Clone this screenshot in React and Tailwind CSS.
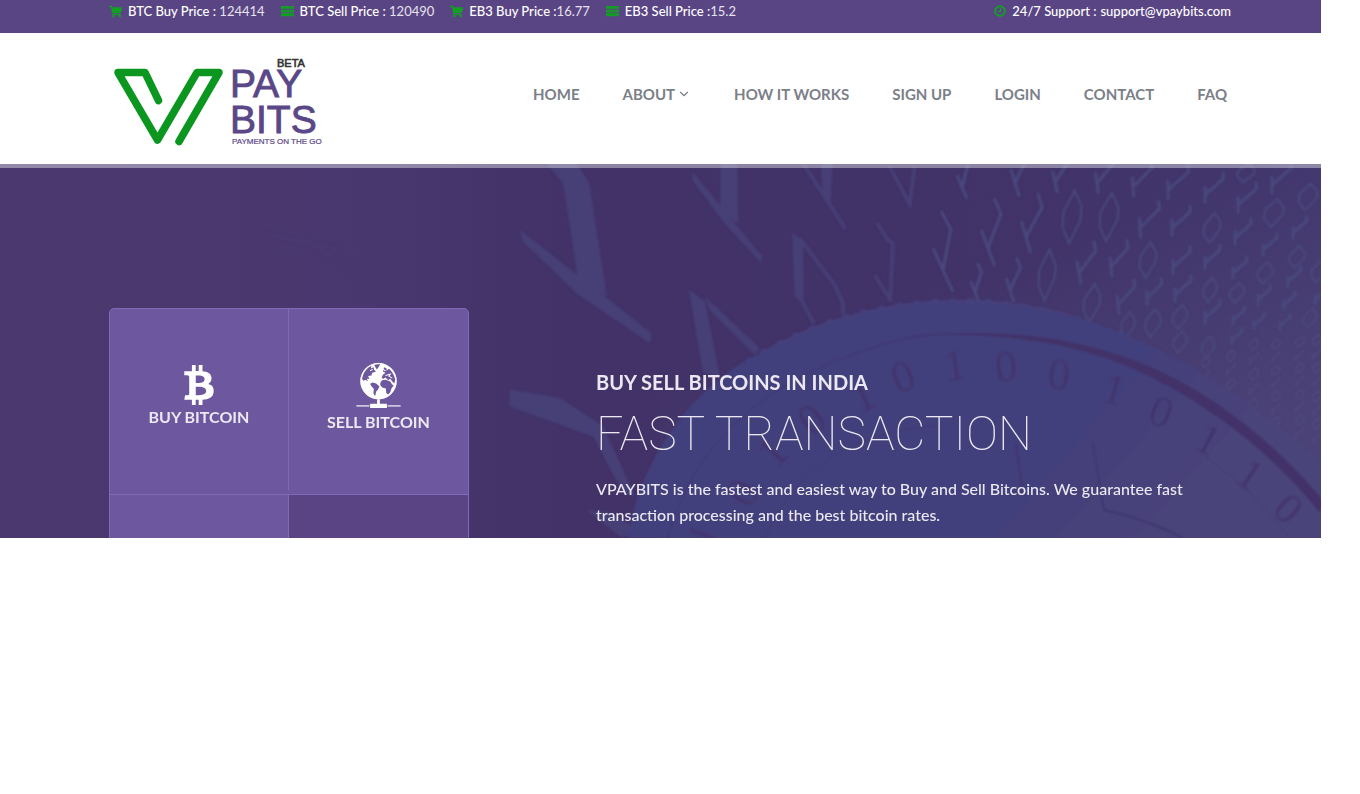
import { FaShoppingCart, FaBtc } from "react-icons/fa";
import { FiChevronDown } from "react-icons/fi";

const prices = [
  { label: "BTC Buy Price : ", value: "124414", icon: FaShoppingCart },
  { label: "BTC Sell Price : ", value: "120490", icon: BarsIcon },
  { label: "EB3 Buy Price :", value: "16.77", icon: FaShoppingCart },
  { label: "EB3 Sell Price :", value: "15.2", icon: BarsIcon },
];

const links = ["HOME", "ABOUT", "HOW IT WORKS", "SIGN UP", "LOGIN", "CONTACT", "FAQ"];

// x, y, height
const ones = [
  [962, 187, 45], [943, 270, 81], [988, 248, 68], [1026, 237, 60], [1015, 183, 50], [1055, 182, 40],
  [1097, 183, 40], [1133, 187, 38], [1168, 190, 36], [1205, 195, 32], [1238, 205, 32], [1272, 185, 34],
  [1140, 228, 38], [1172, 228, 32], [1235, 238, 28], [1010, 290, 44], [975, 292, 40], [1079, 273, 44],
  [1111, 267, 38], [1173, 267, 30], [1205, 263, 26], [1118, 305, 36], [1147, 298, 28], [1175, 295, 28],
  [1205, 318, 26], [1233, 273, 24], [1263, 250, 24], [1293, 233, 24], [1233, 320, 20], [1258, 300, 22],
  [1288, 282, 22], [1284, 305, 20], [1254, 325, 18], [1232, 340, 18], [1280, 326, 18], [1315, 300, 20],
];

// x, y, width, height
const zeros = [
  [1072, 217, 19, 53], [1109, 217, 19, 48], [1047, 275, 17, 51], [1092, 303, 17, 38], [1148, 260, 17, 36],
  [1212, 228, 17, 30], [1210, 290, 14, 25], [1153, 323, 16, 28], [1180, 317, 15, 24], [1180, 342, 14, 22],
  [1208, 347, 13, 22], [1246, 173, 18, 18], [1274, 213, 20, 28], [1308, 197, 19, 27], [1237, 293, 15, 20],
  [1265, 273, 16, 21], [1297, 257, 16, 22], [1318, 272, 14, 22], [1128, 325, 14, 26], [1310, 318, 14, 20],
];

const columns = [
  { x: 1206, from: 362, to: 385, step: 14 },
  { x: 1231, from: 356, to: 392, step: 14 },
  { x: 1254, from: 344, to: 408, step: 15 },
  { x: 1276, from: 344, to: 424, step: 13 },
  { x: 1300, from: 342, to: 440, step: 13 },
  { x: 1317, from: 340, to: 450, step: 14 },
];

// digit, x, y, rotation
const coinDigits = [
  ["0", 743, 493, -58], ["1", 773, 453, -48], ["0", 812, 420, -38], ["1", 863, 397, -26], ["0", 903, 377, -20],
  ["1", 955, 366, -8], ["0", 1006, 367, -4], ["0", 1059, 375, 4], ["1", 1114, 390, 16], ["0", 1161, 412, 20],
  ["1", 1208, 440, 28], ["1", 1250, 475, 34], ["0", 1288, 509, 42],
];

function onePath([x, y, h]) {
  const t = Math.max(0, Math.min(1, (x - 930) / 240));
  const lean = 0.07 + 0.5 * t;
  const tilt = 0.13 * (1 - t);
  const tx = x + lean * h;
  const ty = y - 0.5 * h;
  return `M${tx - tilt * h} ${ty - 0.23 * h}L${tx} ${ty}L${x} ${y}M${x - tilt * h} ${y - 0.27 * h}L${x + tilt * h} ${y + 0.27 * h}`;
}

function zeroPath([x, y, w, h]) {
  return `M${x + 0.15 * w} ${y - 0.5 * h}L${x + 0.5 * w} ${y - 0.2 * h}L${x + 0.45 * w} ${y + 0.05 * h}L${x - 0.15 * w} ${y + 0.5 * h}L${x - 0.5 * w} ${y + 0.2 * h}L${x - 0.45 * w} ${y - 0.1 * h}Z`;
}

function columnPath({ x, from, to, step }) {
  let d = "";
  for (let y = from, i = 0; y < to; y += step, i++) {
    d += i % 2 ? onePath([x - 4, y + 3, step]) : zeroPath([x, y, 9, step - 3]);
  }
  return d;
}

function BarsIcon({ className }) {
  return (
    <svg viewBox="0 0 14 14" className={className} aria-hidden="true">
      <path d="M0 1H14V4H0ZM0 5H14V8H0ZM0 9H14V12H0Z" fill="currentColor" />
      <path d="M8 2.500H13M4 6.500H13M9 10.500H13" stroke="#2f7f48" />
    </svg>
  );
}

function ClockIcon({ className }) {
  return (
    <svg viewBox="0 0 12 12" className={className} fill="none" stroke="currentColor" aria-hidden="true">
      <circle cx="6" cy="6" r="4.800" strokeWidth="1.900" />
      <path d="M6.500 3V6.500H4" strokeWidth="1.200" />
    </svg>
  );
}

function Logo() {
  return (
    <svg viewBox="109 53 221 97" className="w-[221px]" role="img" aria-label="VPAYBITS">
      <path
        d="M158.500 100.500L145 72.500H118L157.500 140L197 72.500H219L179 141.500"
        fill="none"
        stroke="#0a961f"
        strokeWidth="7.500"
        strokeLinecap="round"
        strokeLinejoin="round"
      />
      <g fill="#5a4787" stroke="#5a4787" fontFamily="Liberation Sans, Arial, sans-serif">
        <text x="277" y="67" fontSize="11" fill="#333" stroke="#333" strokeWidth="0.600">BETA</text>
        <text x="230" y="97" fontSize="39" strokeWidth="0.900">PAY</text>
        <text x="230" y="133" fontSize="39" strokeWidth="0.900">BITS</text>
        <text x="232" y="144" fontSize="8" strokeWidth="0.200">PAYMENTS ON THE GO</text>
      </g>
    </svg>
  );
}

function GlobeIcon() {
  return (
    <svg viewBox="20 20 134 140" className="h-[47px] w-[45px]" aria-hidden="true">
      <circle cx="87" cy="77" r="54" fill="#fff" />
      <g fill="#6d579f">
        <path d="M38 70Q42 48 58 36L66 31L64 39L72 36L74 44L80 48L68 52L66 60L56 62L60 70L52 70L56 77L48 73L42 76Z" />
        <path d="M74 28L92 26L88 34L82 42L78 36Z" />
        <path d="M62 85L70 81L80 84L90 93L85 103L80 108L77 122L72 114L73 100L66 92Z" />
        <path d="M93 80L98 74L108 73L122 78L127 86L132 90L126 98L122 110L116 117L110 112L109 99L98 96L92 88Z" />
        <path d="M96 68L100 58L108 52L100 48L104 36L112 40L110 46L118 40Q132 52 137 72L134 84L128 78L122 70L116 74L108 66L102 70Z" />
      </g>
      <path d="M108 60L122 56L118 62L128 68M100 42L108 46M62 46L70 42" fill="none" stroke="#fff" strokeWidth="3" />
      <circle cx="87" cy="77" r="53" fill="none" stroke="#fff" strokeWidth="2" />
      <path d="M83 131H91V144H112V157H62V144H83Z" fill="#fff" />
      <path d="M21 148H60V153H21ZM114 148H153V153H114Z" fill="#fff" opacity="0.650" />
    </svg>
  );
}

function HeroArt() {
  return (
    <svg
      viewBox="0 164 1321 374"
      preserveAspectRatio="xMinYMin slice"
      className="absolute inset-0 h-full w-full"
      aria-hidden="true"
    >
      <defs>
        <linearGradient id="sky" x1="0" y1="0" x2="1" y2="0">
          <stop offset="0" stopColor="#4b386f" />
          <stop offset="0.300" stopColor="#48376e" />
          <stop offset="0.420" stopColor="#423268" />
          <stop offset="0.720" stopColor="#413267" />
          <stop offset="1" stopColor="#42376e" />
        </linearGradient>
        <linearGradient id="haze" gradientUnits="userSpaceOnUse" x1="1170" y1="200" x2="1260" y2="440">
          <stop offset="0" stopColor="#4b4377" stopOpacity="0" />
          <stop offset="1" stopColor="#4b4377" />
        </linearGradient>
        <linearGradient id="coin" gradientUnits="userSpaceOnUse" x1="1080" y1="380" x2="1220" y2="500">
          <stop offset="0" stopColor="#423f7b" />
          <stop offset="1" stopColor="#4a457a" />
        </linearGradient>
        <filter id="soft">
          <feGaussianBlur stdDeviation="0.800" />
        </filter>
      </defs>
      <rect y="164" width="1321" height="374" fill="url(#sky)" />
      <rect x="660" y="164" width="661" height="374" fill="url(#haze)" />

      <g filter="url(#soft)">
        {/* large digits falling in from the left */}
        <g transform="translate(510 160) scale(0.333)" fill="#474077" stroke="#474077">
          <path d="M110 10L200 10L238 70L290 410L205 360L160 70Z" />
          <path d="M30 210L425 520L420 550L200 400L40 245Z" />
          <path d="M632 0H682L685 190L632 150Z" />
          <path d="M548 35L757 290L755 310L640 185L548 60Z" />
          <path d="M935 0H970L962 130L938 100Z" />
          <path d="M848 218L880 245L882 435L855 410Z" />
          <path d="M538 390L585 425L630 650L580 640Z" />
          <path d="M585 410L750 565L735 585L600 450Z" />
          <path
            d="M880 10L1008 208M1140 20L1200 132L1215 20M870 235L975 375L1000 430V465M880 430L912 490M1103 190L1135 240L1150 250L1142 415M1095 345L1145 425"
            fill="none"
            strokeWidth="11"
          />
          <path d="M150 715L280 800L375 1010L340 1000L250 830L0 740V690Z" />
          <path d="M230 1050L330 1130H420L300 1060Z" />
        </g>
        <g fill="none" stroke="#49487e">
          <path d={ones.map(onePath).join("")} strokeWidth="3" />
          <path d={zeros.map(zeroPath).join("")} strokeWidth="2" />
          <path d={columns.map(columnPath).join("")} stroke="#504c82" strokeWidth="1.500" opacity="0.800" />
        </g>
        <path d="M268 234L340 250M300 238L356 272" stroke="#4a3b72" strokeWidth="5" opacity="0.500" />

        <path
          d="M628 538C640 460 690 388 760 353C820 318 890 300 960 300C1080 300 1200 355 1321 462V538Z"
          fill="url(#coin)"
        />
        <path
          d="M632 520C650 455 690 395 760 353C820 318 890 300 960 300C1000 300 1040 306 1080 319"
          fill="none"
          stroke="#423f7b"
          strokeWidth="4"
          strokeDasharray="7 11"
        />
        <path d="M770 348C830 316 900 301 960 301C1000 301 1030 305 1070 315" fill="none" stroke="#50447c" />
        <path d="M668 538C690 450 760 386 850 356C890 340 920 334 960 334" fill="none" stroke="#3f3572" strokeWidth="1" />
        <path
          d="M900 337C1040 322 1130 350 1200 393C1250 424 1290 460 1326 504L1319 512C1285 469 1245 434 1195 402C1125 357 1040 327 900 337Z"
          fill="#423369"
        />
        <path
          d="M765 538C800 460 860 430 940 426M1186 446C1230 470 1260 500 1290 538"
          fill="none"
          stroke="#413871"
          opacity="0.600"
        />
        <path d="M1093 443L1104 510Q1150 520 1182 538M1016 443L1023 494" fill="none" stroke="#41366f" strokeWidth="2" />
        <path d="M690 530L714 538" stroke="#43336b" strokeWidth="4" opacity="0.600" />
        <g
          fill="#43336b"
          opacity="0.800"
          fontFamily="Liberation Serif, Times New Roman, serif"
          fontSize="44"
          textAnchor="middle"
        >
          {coinDigits.map(([digit, x, y, angle]) => (
            <text key={x} transform={`translate(${x} ${y}) rotate(${angle})`} y="14">
              {digit}
            </text>
          ))}
        </g>
      </g>
    </svg>
  );
}

export default function App() {
  return (
    <div className="mr-[39px] font-['Lato',sans-serif]">
      <div className="flex h-[33px] justify-between bg-[#5a4584] pr-[90px] pl-[109px] text-[13px] leading-[22px] text-white">
        <ul className="flex gap-4">
          {prices.map(({ label, value, icon: Icon }) => (
            <li key={label} className="flex items-start">
              <Icon className="mt-[5px] mr-[6px] size-[13px] text-[#12a022]" />
              <span className="whitespace-pre">
                <span className="font-medium">{label}</span>
                <span className="text-[#e6e2ee]">{value}</span>
              </span>
            </li>
          ))}
        </ul>
        <div className="flex items-start font-medium">
          <ClockIcon className="mt-[5px] mr-[6px] size-3 text-[#12a022]" />
          <span className="mr-1">24/7 Support :</span>
          <a href="mailto:support@vpaybits.com">support@vpaybits.com</a>
        </div>
      </div>

      <header className="flex h-[131px] items-center justify-between bg-white pr-[94px] pl-[109px]">
        <a href="#home" className="mt-[6px]">
          <Logo />
        </a>
        <nav className="mb-[10px] flex gap-[43px] text-[15px] leading-5 font-bold text-[#7b8088]">
          {links.map((link) => (
            <a key={link} href="#" className="flex items-center">
              {link}
              {link === "ABOUT" && <FiChevronDown className="mt-px ml-[2px] size-[14px]" />}
            </a>
          ))}
        </nav>
      </header>

      <section className="relative h-[374px] overflow-hidden bg-[#42336a]">
        <HeroArt />
        <div className="relative flex h-full items-start border-t-4 border-white/40 pt-[140px] pl-[109px]">
          <div className="w-[360px] shrink-0 overflow-hidden rounded-[5px] border border-[#8069b6] bg-[#6d579f] text-base leading-5 font-bold text-[#ebe8f1]">
            <div className="flex h-[186px] border-b border-[#8069b6]">
              <a href="#buy" className="mb-1 flex w-1/2 flex-col items-center border-r border-[#8069b6] pt-14">
                <FaBtc className="size-10 text-white" />
                <span className="mt-[2px]">BUY BITCOIN</span>
              </a>
              <a href="#sell" className="flex w-1/2 flex-col items-center pt-[53px]">
                <GlobeIcon />
                <span className="mt-[3px]">SELL BITCOIN</span>
              </a>
            </div>
            <div className="flex h-[186px]">
              <div className="w-1/2 border-r border-[#8069b6]" />
              <div className="w-1/2 bg-[#5a4484]" />
            </div>
          </div>

          <div className="mt-[62px] ml-[127px] max-w-[610px] text-[#ebe8f1]">
            <h2 className="text-xl leading-6 font-bold">BUY SELL BITCOINS IN INDIA</h2>
            <h1 className="mt-[13px] font-['Roboto',sans-serif] text-5xl leading-[54px] font-thin">FAST TRANSACTION</h1>
            <p className="mt-[15px] text-base leading-[26px] font-medium">
              VPAYBITS is the fastest and easiest way to Buy and Sell Bitcoins. We guarantee fast transaction processing
              and the best bitcoin rates.
            </p>
          </div>
        </div>
      </section>
    </div>
  );
}
